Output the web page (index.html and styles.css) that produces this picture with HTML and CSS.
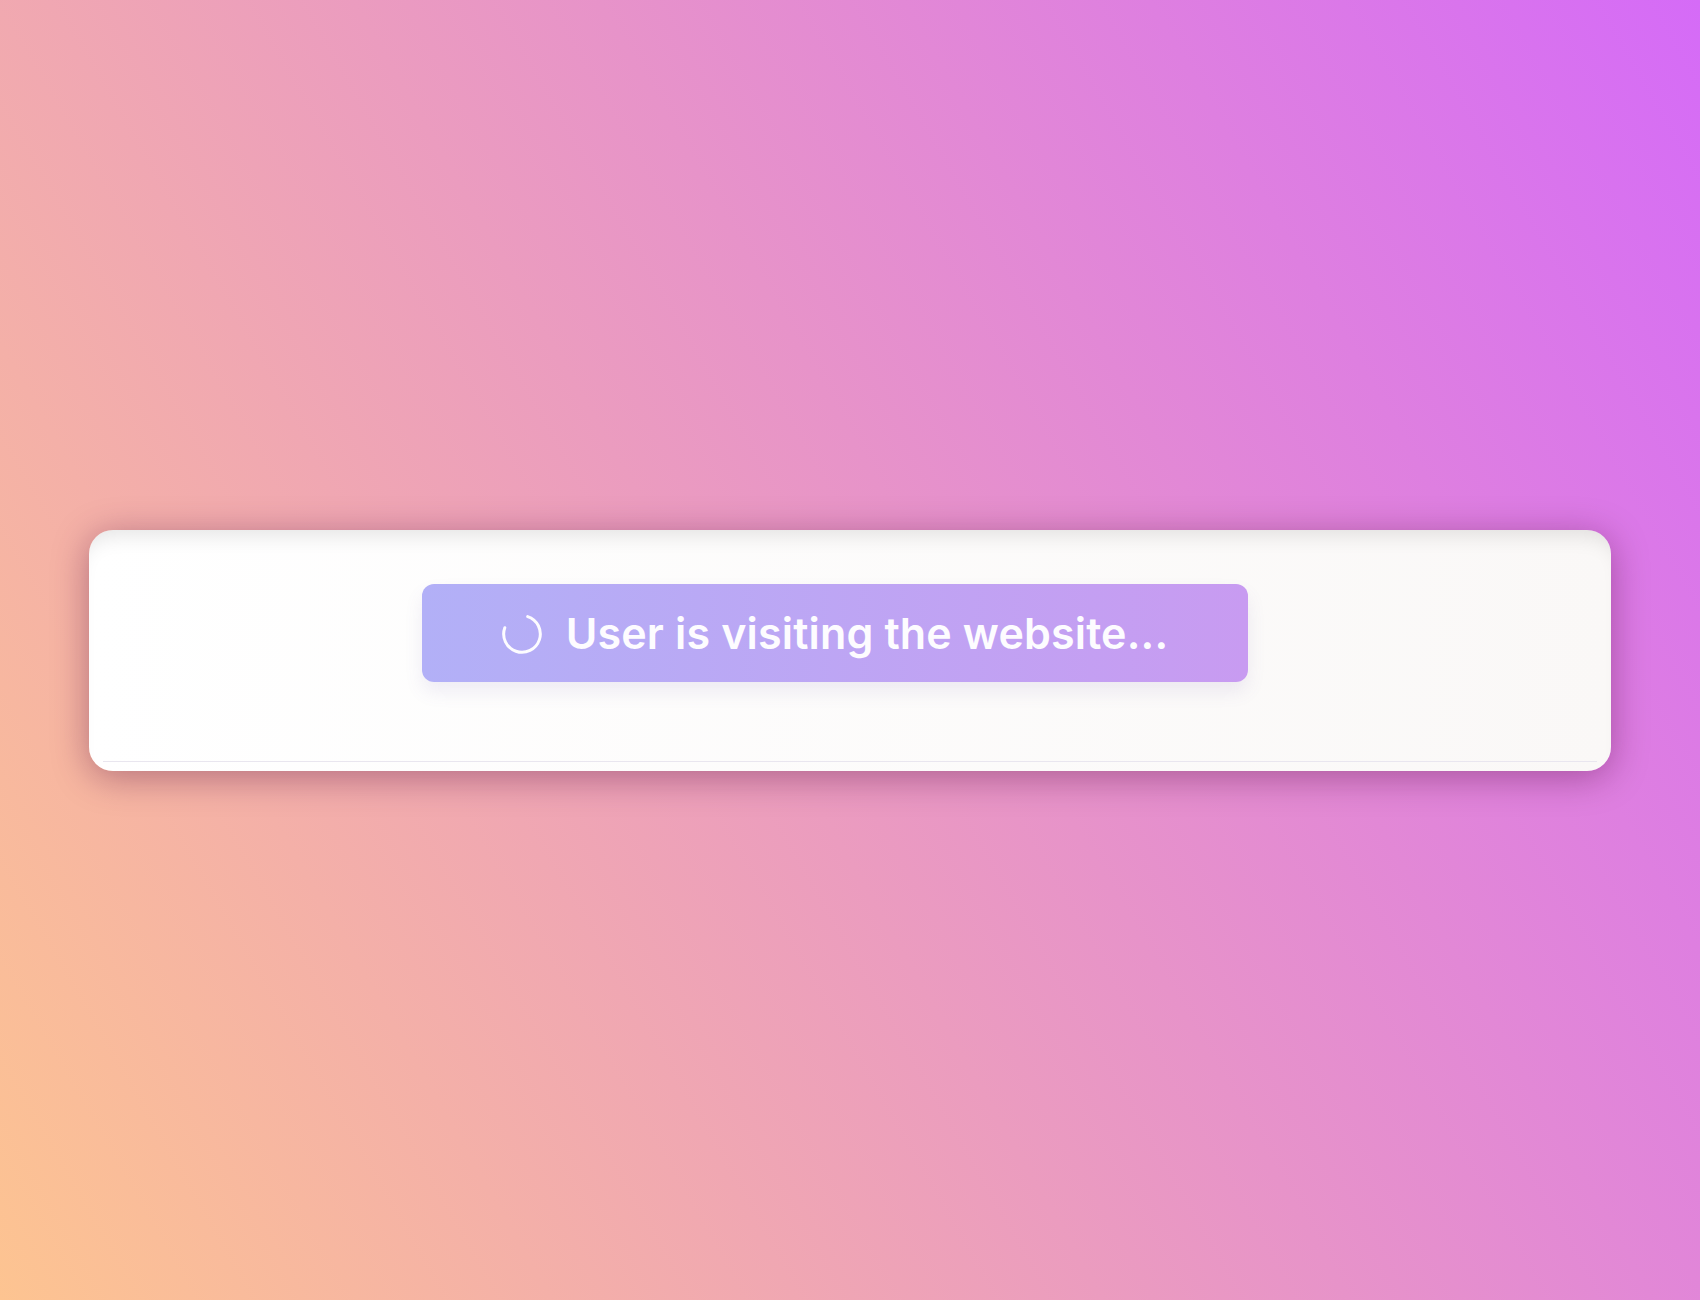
FILE: index.html
```html
<!DOCTYPE html>
<html lang="en">
<head>
    <meta charset="UTF-8">
    <meta name="viewport" content="width=device-width, initial-scale=1.0">
    <title>Visitor Status</title>
    <link rel="stylesheet" href="styles.css">
</head>
<body>

<main class="stage">
    <section class="card">
        <div class="card-body">
            <div class="status-pill">
                <!-- loading ring -->
                <svg class="spinner" viewBox="0 0 40 40" aria-hidden="true">
                    <path d="M25.66 2.6 A18.3 18.3 0 1 1 2.8 13.74" />
                </svg>
                <span class="status-text">User is visiting the website...</span>
            </div>
        </div>
    </section>
</main>

</body>
</html>
```

FILE: styles.css
```css
html, body { margin: 0; height: 100%; }
body {
    font-family: Inter, "Noto Sans", Arial, sans-serif;
    background: linear-gradient(60deg, #fdc491 0%, #d56bf7 100%);
}
.stage {
    height: 100vh;
    display: flex;
    align-items: center;
    justify-content: center;
}
.card {
    width: 1522px;
    height: 241px;
    box-sizing: border-box;
    padding: 0 14px 9px;
    display: flex;
    flex-direction: column;
    border-radius: 24px;
    background: linear-gradient(90deg, #ffffff, #faf8f7);
    box-shadow: 0 6px 36px rgba(80, 10, 60, 0.4), inset 0 18px 20px -12px rgba(0, 0, 0, 0.1);
}
.card-body {
    flex: 1;
    display: flex;
    justify-content: center;
    align-items: flex-start;
    padding: 54px 30px 0 0;
    border-bottom: 1px solid #e9e6ef;
}
.status-pill {
    width: 826px;
    height: 98px;
    box-sizing: border-box;
    display: flex;
    align-items: center;
    justify-content: center;
    gap: 24px;
    border-radius: 12px;
    background: linear-gradient(90deg, #b2b0f7, #c89bf1);
    box-shadow: 0 10px 18px rgba(110, 90, 170, 0.10);
}
.spinner {
    width: 40px;
    height: 40px;
    flex: none;
    margin-top: 2px;
}
.spinner path {
    fill: none;
    stroke: #fdfcff;
    stroke-width: 3;
    stroke-linecap: round;
}
.status-text {
    color: #fdfcff;
    font-size: 43px;
    font-weight: 600;
    letter-spacing: 0.15px;
}
```
